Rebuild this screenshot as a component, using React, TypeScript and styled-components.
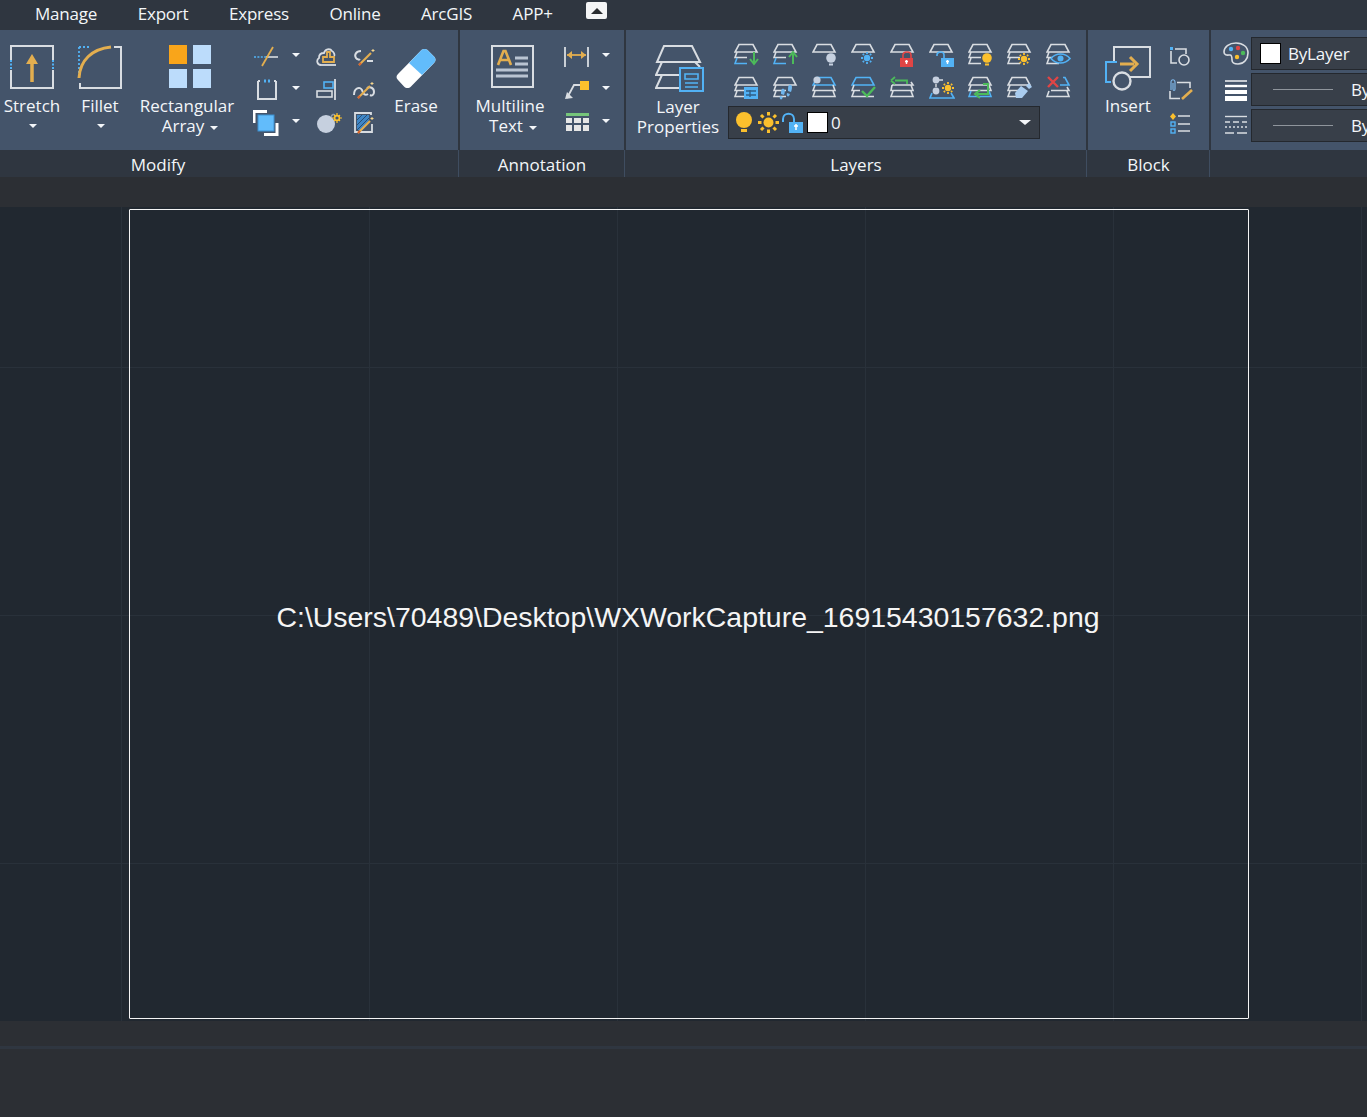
import React from "react";
import styled, { createGlobalStyle } from "styled-components";

const WHITE = "#d9dde2";
const BLUE = "#52b2f5";
const GOLD = "#e3ae4f";
const YELLOW = "#fbc02d";
const GREEN = "#4cbb5a";
const RED = "#e04545";

const GlobalStyle = createGlobalStyle`
	html, body {
		margin: 0;
		padding: 0;
		background: #2c2f34;
		overflow: hidden;
	}
	* {
		box-sizing: border-box;
	}
	svg {
		display: block;
		flex: none;
	}
`;

const Page = styled.div`
	width: 1367px;
	height: 1117px;
	overflow: hidden;
	font-family: "Open Sans", "Noto Sans", sans-serif;
	color: #f3f6f9;
	background: #2c2f34;
`;

const TabBar = styled.div`
	height: 30px;
	display: flex;
	align-items: flex-start;
	gap: 40.5px;
	padding-left: 35px;
	background: #2f3640;
`;

const Tab = styled.div`
	font-size: 17px;
	line-height: 28px;
	letter-spacing: -0.2px;
`;

const CollapseButton = styled.div`
	width: 21px;
	height: 17px;
	margin: 2px 0 0 -7px;
	display: flex;
	align-items: center;
	justify-content: center;
	background: #f4f5f6;
	border-radius: 2px;

	&::after {
		content: "";
		border-left: 6px solid transparent;
		border-right: 6px solid transparent;
		border-bottom: 6px solid #2a2d31;
	}
`;

const Ribbon = styled.div`
	display: flex;
	height: 147px;
	background: #2f3640;
	overflow: hidden;
`;

const Panel = styled.div<{ $width: number }>`
	flex: none;
	width: ${(p) => p.$width}px;
	margin-right: 2px;
	display: flex;
	flex-direction: column;
`;

const PanelBody = styled.div`
	height: 120px;
	display: flex;
	background: #44546a;
`;

const PanelTitle = styled.div<{ $endPad?: number }>`
	height: 27px;
	padding-right: ${(p) => p.$endPad ?? 0}px;
	text-align: center;
	font-size: 17px;
	line-height: 29px;
	background: #2f3640;
	box-shadow: 1px 0 0 #3f4d60;
`;

const BigTool = styled.div<{ $width: number; $margin?: number }>`
	flex: none;
	width: ${(p) => p.$width}px;
	margin-left: ${(p) => p.$margin ?? 0}px;
	padding-top: 15px;
	display: flex;
	flex-direction: column;
	align-items: center;
`;

const IconBox = styled.div<{ $height?: number; $shift?: number; $top?: number }>`
	height: ${(p) => p.$height ?? 51}px;
	margin-left: ${(p) => p.$shift ?? 0}px;
	padding-top: ${(p) => p.$top ?? 0}px;
`;

const Label = styled.div`
	font-size: 17px;
	line-height: 20px;
	text-align: center;
	white-space: nowrap;
`;

const DropLine = styled.div`
	padding-left: 6px;
`;

const Caret = styled.span<{ $size?: number }>`
	display: inline-block;
	border-left: ${(p) => p.$size ?? 4}px solid transparent;
	border-right: ${(p) => p.$size ?? 4}px solid transparent;
	border-top: ${(p) => ((p.$size ?? 4) * 3) / 4 + 1}px solid #f3f6f9;
`;

const InlineCaret = styled(Caret)`
	margin-left: 6px;
	vertical-align: 2px;
`;

const CaretLine = styled.div`
	height: 20px;
	padding-left: 2px;
	display: flex;
	align-items: center;
	justify-content: center;
`;

const SmallGrid = styled.div<{ $columns: string; $margin: number }>`
	flex: none;
	margin: 10px 0 0 ${(p) => p.$margin}px;
	display: grid;
	grid-template-columns: ${(p) => p.$columns};
	grid-auto-rows: 33px;
	align-items: center;
`;

const DropTool = styled.div<{ $endPad: number }>`
	display: flex;
	align-items: center;
	justify-content: space-between;
	padding-right: ${(p) => p.$endPad}px;
`;

const DropCaret = styled(Caret)`
	margin-bottom: 3px;
`;

const LayerColumn = styled.div`
	flex: none;
	margin-left: 4px;
	padding-top: 13px;
`;

const LayerGrid = styled.div`
	display: grid;
	grid-template-columns: repeat(9, 39px);
	grid-auto-rows: 33px;
	padding-left: 6px;
`;

const Combo = styled.div<{ $width: number; $height?: number }>`
	width: ${(p) => p.$width}px;
	height: ${(p) => p.$height ?? 33}px;
	display: flex;
	align-items: center;
	background: #383f49;
	border: 1px solid #24282e;
`;

const LayerCombo = styled(Combo)`
	margin-top: -3px;
	padding-left: 5px;
	gap: 3.5px;
`;

const ComboValue = styled.span`
	font-size: 17px;
`;

const ComboCaret = styled(Caret)`
	margin-left: auto;
	margin-right: 8px;
`;

const Swatch = styled.span`
	flex: none;
	width: 21px;
	height: 21px;
	background: #fff;
	border: 1px solid #000;
`;

const PropertyIcons = styled.div`
	flex: none;
	width: 40px;
	padding: 12px 0 0 9px;
	display: flex;
	flex-direction: column;
	align-items: center;
	gap: 14px;
`;

const PropertyCombos = styled.div`
	flex: none;
	padding-top: 7px;
	display: flex;
	flex-direction: column;
	gap: 3px;
`;

const PropertyLabel = styled.span`
	font-size: 17px;
	letter-spacing: -0.2px;
	white-space: nowrap;
`;

const ColorCombo = styled(Combo)`
	padding-left: 8px;
	gap: 7px;
`;

const LineCombo = styled(Combo)`
	padding-left: 21px;
	gap: 18px;
`;

const LinePreview = styled.span`
	flex: none;
	width: 60px;
	height: 1px;
	background: #8f959c;
`;

const TopGap = styled.div`
	height: 30px;
	background: #2c2f34;
`;

const Canvas = styled.div`
	height: 814px;
	padding: 2px 0 0 129px;
	background-color: #212830;
	background-image: linear-gradient(to right, #29313a 1px, transparent 1px),
		linear-gradient(to bottom, #29313a 1px, transparent 1px);
	background-size: 248px 248px;
	background-position: 121px 160px;
`;

const Sheet = styled.div`
	width: 1120px;
	height: 810px;
	display: flex;
	align-items: center;
	justify-content: center;
	border: 1px solid #f4f4f4;
	border-radius: 1px;
`;

const SheetText = styled.div`
	font-family: "Liberation Sans", Arial, sans-serif;
	font-size: 28.44px;
	color: #f5f5f5;
	margin: 6px 2px 0 0;
	white-space: nowrap;
`;

const BottomGap = styled.div`
	height: 25px;
	background: #2c2f34;
`;

const Stripe = styled.div`
	height: 3px;
	background: #2f3640;
`;

const StatusArea = styled.div`
	height: 68px;
	background: #2c2f34;
`;

type SvgProps = { w: number; h: number; children: React.ReactNode };

const Svg = ({ w, h, children }: SvgProps) => (
	<svg width={w} height={h} viewBox={`0 0 ${w} ${h}`} fill="none">
		{children}
	</svg>
);

const StretchIcon = () => (
	<Svg w={44} h={44}>
		<path d="M1 15V1H43V15M1 25V43H43V25" stroke={WHITE} strokeWidth="2" />
		<path d="M1 15V25M43 15V25" stroke={BLUE} strokeWidth="2" strokeDasharray="2 1.5" />
		<path d="M22 37V15" stroke={GOLD} strokeWidth="3.5" />
		<path d="M16 19L22 9L28 19Z" fill={GOLD} />
	</Svg>
);

const FilletIcon = () => (
	<Svg w={46} h={46}>
		<path d="M2 2H14M2 2V28" stroke={BLUE} strokeWidth="1.8" strokeDasharray="2 2" />
		<path d="M2 33C3 15 15 4 34 2" stroke={GOLD} strokeWidth="3" />
		<path d="M37 2H44V43H3V38" stroke={WHITE} strokeWidth="2" />
	</Svg>
);

const ArrayIcon = () => (
	<Svg w={44} h={44}>
		<rect x="1" y="0" width="18" height="19" fill="#f9a51a" />
		<rect x="25" y="0" width="18" height="19" fill="#bcdcfb" />
		<rect x="1" y="24" width="18" height="19" fill="#bcdcfb" />
		<rect x="25" y="24" width="18" height="19" fill="#bcdcfb" />
	</Svg>
);

const EraseIcon = () => (
	<Svg w={42} h={42}>
		<path d="M3 27L26 3.5C28 1.5 31 1.5 33 3.5L39 9.5C41 11.5 41 14 39 16L16 39.5C14 41.5 11 41.5 9 39.5L3 33C1 31 1 29 3 27Z" fill="#fff" />
		<path d="M14 16L26 3.5C28 1.5 31 1.5 33 3.5L39 9.5C41 11.5 41 14 39 16L27 28Z" fill="#62bcfb" />
	</Svg>
);

const TrimIcon = () => (
	<Svg w={26} h={22}>
		<path d="M1 11H13" stroke={BLUE} strokeWidth="1.6" strokeDasharray="2 1.4" />
		<path d="M13 11H25" stroke={WHITE} strokeWidth="1.6" />
		<path d="M9 20L20 1" stroke={GOLD} strokeWidth="1.8" />
	</Svg>
);

const BracketIcon = () => (
	<Svg w={26} h={22}>
		<path d="M5 2V20H23V2M5 2H7M23 2H21" stroke={WHITE} strokeWidth="2" />
		<path d="M11 2H13M15 2H17" stroke={BLUE} strokeWidth="3" />
	</Svg>
);

const CopyIcon = () => (
	<Svg w={26} h={26}>
		<path d="M1 13V1.5H14" stroke="#fff" strokeWidth="3" />
		<path d="M24 13V24.5H11" stroke="#fff" strokeWidth="3" />
		<rect x="5" y="5" width="16" height="16" fill="#62bcfb" stroke="#3c8fd0" />
	</Svg>
);

const CloudIcon = () => (
	<Svg w={22} h={22}>
		<path d="M5 19C1 19 0 14 3 12C3 8 6 7 8 7C9 3 14 2 16 5C18 6 19 9 18 10" stroke={WHITE} strokeWidth="1.8" />
		<path d="M5 19H20" stroke={WHITE} strokeWidth="1.8" />
		<path d="M11 6H14V11H18V16H7V11H11Z" stroke={GOLD} strokeWidth="1.8" />
	</Svg>
);

const AlignIcon = () => (
	<Svg w={22} h={22}>
		<rect x="8" y="3" width="9" height="6" stroke={BLUE} strokeWidth="1.6" />
		<rect x="1" y="12" width="15" height="6" stroke={WHITE} strokeWidth="1.6" />
		<path d="M19 0V21" stroke={WHITE} strokeWidth="1.8" />
	</Svg>
);

const BombIcon = () => (
	<Svg w={26} h={22}>
		<circle cx="10" cy="12" r="9" fill="#c6d0df" />
		<path d="M15 5C16 2 18 2 19 3" stroke="#8f9bac" strokeWidth="1.4" />
		<circle cx="21" cy="6" r="2.4" stroke={YELLOW} strokeWidth="1.6" />
		<path d="M21 1V3M21 9V11M16 6H18M24 6H26M18 3L19 4M23 8L24 9M18 9L19 8M23 4L24 3" stroke={YELLOW} strokeWidth="1.2" />
	</Svg>
);

const Pencil = ({ x, y }: { x: number; y: number }) => (
	<g transform={`translate(${x} ${y})`}>
		<path d="M0 13L12 1" stroke={GOLD} strokeWidth="2.2" />
		<path d="M0 13L2 11" stroke="#d8622f" strokeWidth="2.2" />
		<path d="M14 -3V0M12.5 -1.5H15.5" stroke="#f6d68d" strokeWidth="1" />
	</g>
);

const EditCurveIcon = () => (
	<Svg w={22} h={20}>
		<path d="M8 4C3 4 1 8 3 11C4 13 6 12 7 13" stroke={WHITE} strokeWidth="2" />
		<path d="M14 14H20" stroke={WHITE} strokeWidth="2" />
		<Pencil x={6} y={5} />
	</Svg>
);

const EditSplineIcon = () => (
	<Svg w={22} h={20}>
		<path d="M1 15C1 8 7 6 9 10C10 14 12 16 15 14M14 8C17 6 21 8 21 12C21 15 19 16 17 15" stroke={WHITE} strokeWidth="2" />
		<Pencil x={5} y={5} />
	</Svg>
);

const EditHatchIcon = () => (
	<Svg w={22} h={22}>
		<path d="M18 3V1H2V20H19V12" stroke={WHITE} strokeWidth="1.8" />
		<path d="M4 3H16V8L9 18H4Z" fill="#3f86c6" />
		<path d="M4 8L9 3M4 13L14 3M4 18L16 6" stroke="#274d73" strokeWidth="1" />
		<Pencil x={5} y={8} />
	</Svg>
);

const TextIcon = () => (
	<Svg w={44} h={44}>
		<rect x="1" y="1" width="41" height="41" stroke={WHITE} strokeWidth="2" />
		<path d="M7 20L12.5 6H14.5L20 20M9.5 15H17.5" stroke={GOLD} strokeWidth="2.6" />
		<path d="M24 13H37M24 19H37M5 25H37M5 31H37" stroke="#b9c4d2" strokeWidth="3" />
	</Svg>
);

const DimensionIcon = () => (
	<Svg w={26} h={22}>
		<path d="M1 1V21M24 1V21" stroke={WHITE} strokeWidth="1.8" />
		<path d="M3 9H22" stroke={GOLD} strokeWidth="1.8" />
		<path d="M3 9L8 5V13ZM22 9L17 5V13Z" fill={GOLD} />
	</Svg>
);

const LeaderIcon = () => (
	<Svg w={26} h={22}>
		<rect x="16" y="2" width="9" height="9" fill={YELLOW} />
		<path d="M16 6H10L3 19" stroke={WHITE} strokeWidth="1.8" />
		<path d="M1 20L9 19L3 13Z" fill={WHITE} />
	</Svg>
);

const TableIcon = () => (
	<Svg w={26} h={22}>
		<rect x="2" y="1" width="23" height="3" fill="#76c57a" />
		<path d="M2 6H8V11H2ZM10 6H17V11H10ZM19 6H25V11H19ZM2 13H8V19H2ZM10 13H17V19H10ZM19 13H25V19H19Z" fill="#e6e6e6" />
	</Svg>
);

const LayerPropertiesIcon = () => (
	<Svg w={50} h={50}>
		<path d="M9 1H37L45 17H2Z" stroke={WHITE} strokeWidth="2" />
		<path d="M7 17L1 30H24M7 30L1 43H24M40 17L45 22" stroke={WHITE} strokeWidth="2" />
		<rect x="25" y="23" width="23" height="23" fill="#44546a" stroke={BLUE} strokeWidth="2" />
		<path d="M30 29H43V34H30ZM30 38H43M30 42H43" stroke={BLUE} strokeWidth="1.6" />
	</Svg>
);

const InsertIcon = () => (
	<Svg w={46} h={46}>
		<path d="M9 17V2H45V32H24" stroke={WHITE} strokeWidth="2" />
		<path d="M12 17H1V37H6" stroke={BLUE} strokeWidth="2" />
		<path d="M15 19H29" stroke={GOLD} strokeWidth="3" />
		<path d="M25 12L32 19L25 26" stroke={GOLD} strokeWidth="3" />
		<circle cx="17" cy="36" r="8.5" stroke={WHITE} strokeWidth="2.4" />
	</Svg>
);

const BlockCircleIcon = () => (
	<Svg w={22} h={20}>
		<path d="M2 4V16H8M6 2H17V7" stroke={WHITE} strokeWidth="1.6" />
		<rect x="1" y="0" width="3" height="3" fill={BLUE} />
		<circle cx="15" cy="13" r="5" stroke={WHITE} strokeWidth="1.6" />
	</Svg>
);

const BlockEditIcon = () => (
	<Svg w={24} h={22}>
		<path d="M1 12V19.5H11M8 3.5H21V9" stroke={WHITE} strokeWidth="1.6" />
		<path d="M2 11V3C2 0 6 0 6 3V10C6 12 4 12 4 10V4" stroke="#7fb7e8" strokeWidth="1.2" />
		<path d="M13 20L23 11" stroke={GOLD} strokeWidth="2.6" />
	</Svg>
);

const BlockListIcon = () => (
	<Svg w={22} h={22}>
		<path d="M4 1L7 4.5L4 8L1 4.5Z" fill={YELLOW} />
		<path d="M9 4H21M9 12H21M9 19H21" stroke={WHITE} strokeWidth="1.6" />
		<rect x="2" y="10" width="4" height="4" stroke={BLUE} strokeWidth="1.4" />
		<rect x="2" y="17" width="4" height="4" stroke={BLUE} strokeWidth="1.4" />
	</Svg>
);

const PaletteIcon = () => (
	<Svg w={26} h={24}>
		<path d="M13 1C6 1 1 5 1 10C1 14 5 13 7 13C9 13 9 16 9 18C9 21 12 22 15 22C21 22 25 17 25 11C25 5 20 1 13 1Z" stroke={WHITE} strokeWidth="1.6" />
		<circle cx="8" cy="7" r="2.2" fill={BLUE} />
		<circle cx="15" cy="6" r="2.2" fill={RED} />
		<circle cx="20" cy="11" r="2.2" fill={GREEN} />
		<circle cx="14" cy="15" r="2.2" fill={YELLOW} />
	</Svg>
);

const LineWeightIcon = () => (
	<Svg w={22} h={21}>
		<path d="M0 1H22" stroke="#fff" strokeWidth="1.4" />
		<path d="M0 6H22" stroke="#fff" strokeWidth="2.4" />
		<rect x="0" y="10" width="22" height="4" fill="#fff" />
		<rect x="0" y="16" width="22" height="5" fill="#fff" />
	</Svg>
);

const LineTypeIcon = () => (
	<Svg w={22} h={21}>
		<path d="M0 1.5H22" stroke={WHITE} strokeWidth="1.4" />
		<path d="M0 7H5M8 7H14M17 7H22" stroke={WHITE} strokeWidth="1.4" />
		<path d="M0 12H2M4 12H6M8 12H10M12 12H14M16 12H18M20 12H22" stroke={WHITE} strokeWidth="1.4" />
		<path d="M0 18H9M12 18H22" stroke={WHITE} strokeWidth="1.4" />
	</Svg>
);

// the layer tools all share the same stack of sheets
const SheetTop = ({ color = WHITE }: { color?: string }) => (
	<path d="M5 1.5H19L23 9H1Z" stroke={color} strokeWidth="1.6" />
);
const SheetsLeft = ({ last = WHITE }: { last?: string }) => (
	<>
		<path d="M3 9L1 14.5H13" stroke={WHITE} strokeWidth="1.6" />
		<path d="M3 15L1 20.5H13" stroke={last} strokeWidth="1.6" />
	</>
);
const SheetsFull = ({ color = WHITE }: { color?: string }) => (
	<>
		<path d="M3 9L1 14.5H23L21 9" stroke={WHITE} strokeWidth="1.6" />
		<path d="M3 15L1 20.5H23L21 15" stroke={color} strokeWidth="1.6" />
	</>
);

const Bulb = ({ color, x, y }: { color: string; x: number; y: number }) => (
	<g transform={`translate(${x} ${y})`}>
		<circle cx="5" cy="5" r="4.8" fill={color} />
		<rect x="3" y="10.5" width="4" height="2" fill={color} />
	</g>
);

const Sun = ({ color, x, y }: { color: string; x: number; y: number }) => (
	<g transform={`translate(${x} ${y})`}>
		<circle cx="6" cy="6" r="3.2" fill={color} />
		<path d="M6 0V2M6 10V12M0 6H2M10 6H12M1.8 1.8L3 3M9 9L10.2 10.2M1.8 10.2L3 9M9 3L10.2 1.8" stroke={color} strokeWidth="1.8" />
	</g>
);

const Lock = ({ color, x, y, open }: { color: string; x: number; y: number; open?: boolean }) => (
	<g transform={`translate(${x} ${y})`}>
		<path d={open ? "M-4 4V3C-4 -1 3 -1 3 3V6" : "M3 6V3C3 -1 11 -1 11 3V6"} stroke={color} strokeWidth="1.6" />
		<rect x="0" y="6" width="13" height="9" fill={color} />
		<path d="M6.5 8V12M5 9.5H8" stroke="#fff" strokeWidth="1.4" />
	</g>
);

const layerIcons: React.ReactNode[] = [
	<>
		<SheetTop />
		<SheetsLeft last={BLUE} />
		<path d="M20 9V20" stroke={GREEN} strokeWidth="2" />
		<path d="M16 16L20 21L24 16" stroke={GREEN} strokeWidth="2" />
	</>,
	<>
		<SheetTop />
		<SheetsLeft last={BLUE} />
		<path d="M20 21V11" stroke={GREEN} strokeWidth="2" />
		<path d="M16 14L20 9L24 14" stroke={GREEN} strokeWidth="2" />
	</>,
	<>
		<SheetTop />
		<Bulb color="#c6d0df" x={14} y={10} />
	</>,
	<>
		<SheetTop />
		<Sun color={BLUE} x={10} y={9} />
	</>,
	<>
		<SheetTop />
		<Lock color={RED} x={10} y={9} />
	</>,
	<>
		<SheetTop />
		<Lock color={BLUE} x={12} y={9} open />
	</>,
	<>
		<SheetTop />
		<SheetsLeft />
		<Bulb color={YELLOW} x={14} y={10} />
	</>,
	<>
		<SheetTop />
		<SheetsLeft />
		<Sun color={YELLOW} x={11} y={10} />
	</>,
	<>
		<SheetTop />
		<SheetsLeft />
		<path d="M5 15.5C10 9.5 19 9.5 24 15.5C19 21.5 10 21.5 5 15.5Z" fill="#44546a" stroke={BLUE} strokeWidth="1.6" />
		<circle cx="14.5" cy="15.5" r="3" fill={BLUE} />
	</>,
	<>
		<SheetTop />
		<SheetsLeft />
		<rect x="10" y="11" width="14" height="12" fill={BLUE} />
		<path d="M12 15H22M12 19H22M16 14V21" stroke="#2f5f87" strokeWidth="1.4" />
	</>,
	<>
		<SheetTop />
		<SheetsLeft />
		<path d="M16 9C19 8 20 11 18 16L15 15C15 12 15 10 16 9ZM14 17L17 18L16 20C15 21 13 20 14 17Z" fill="#6fb6ee" />
		<path d="M9 13C11 12 13 14 11 19L8 18C8 16 8 14 9 13ZM7 20L10 21L9 23C8 24 6 23 7 20Z" fill="#6fb6ee" />
	</>,
	<>
		<SheetTop color={BLUE} />
		<SheetsFull />
		<circle cx="5" cy="4" r="3.6" fill="#c6d0df" />
	</>,
	<>
		<SheetTop color={BLUE} />
		<path d="M3 9L1 14.5H9M3 15L1 20.5H23" stroke={WHITE} strokeWidth="1.6" />
		<path d="M11 15L16 20L24 11" stroke={GREEN} strokeWidth="2.4" />
	</>,
	<>
		<path d="M2 9H23L21 6M2 9L1 14.5H23L21 9M3 15L1 20.5H23L21 15" stroke={WHITE} strokeWidth="1.6" />
		<path d="M5 4.5H17V8M1 4.5L5 1M1 4.5L5 8" stroke={GREEN} strokeWidth="1.8" />
	</>,
	<>
		<circle cx="7" cy="4" r="3.4" fill="#c6d0df" />
		<circle cx="7" cy="15" r="3.4" fill="#c6d0df" />
		<path d="M10 4H14M7 8V11" stroke={WHITE} strokeWidth="1.4" />
		<Sun color={YELLOW} x={13} y={6} />
		<path d="M3 17L1 22H25L22 17" stroke={BLUE} strokeWidth="1.6" />
	</>,
	<>
		<SheetTop />
		<SheetsFull color={BLUE} />
		<path d="M15 8H20V18H9" stroke={GREEN} strokeWidth="2" />
		<path d="M12 14L7 18L12 22" stroke={GREEN} strokeWidth="2" />
	</>,
	<>
		<SheetTop />
		<SheetsLeft />
		<path d="M8 17L14 10L21 15L15 22H9Z" fill="#a9ccef" />
		<path d="M19 10L22 7L25 11L22 13Z" fill="#a9ccef" />
	</>,
	<>
		<path d="M17 1.5H19L23 9H14" stroke={BLUE} strokeWidth="1.6" />
		<path d="M3 15L1 20.5H23L21 15M5 14.5H23L21 11" stroke={WHITE} strokeWidth="1.6" />
		<path d="M2 1L12 11M12 1L2 11" stroke={RED} strokeWidth="2.4" />
	</>,
];

const SmallDrop = ({ children, endPad }: { children: React.ReactNode; endPad: number }) => (
	<DropTool $endPad={endPad}>
		{children}
		<DropCaret />
	</DropTool>
);

export default function App() {
	return (
		<Page>
			<GlobalStyle />
			<TabBar>
				<Tab>Manage</Tab>
				<Tab>Export</Tab>
				<Tab>Express</Tab>
				<Tab>Online</Tab>
				<Tab>ArcGIS</Tab>
				<Tab>APP+</Tab>
				<CollapseButton />
			</TabBar>
			<Ribbon>
				<Panel $width={458}>
					<PanelBody>
						<BigTool $width={64}>
							<IconBox>
								<StretchIcon />
							</IconBox>
							<Label>Stretch</Label>
							<CaretLine>
								<Caret />
							</CaretLine>
						</BigTool>
						<BigTool $width={64} $margin={4}>
							<IconBox>
								<FilletIcon />
							</IconBox>
							<Label>Fillet</Label>
							<CaretLine>
								<Caret />
							</CaretLine>
						</BigTool>
						<BigTool $width={104} $margin={3}>
							<IconBox $shift={5}>
								<ArrayIcon />
							</IconBox>
							<Label>
								Rectangular
								<DropLine>
									Array
									<InlineCaret />
								</DropLine>
							</Label>
						</BigTool>
						<SmallGrid $columns="63px 37px 30px" $margin={14}>
							<SmallDrop endPad={16}>
								<TrimIcon />
							</SmallDrop>
							<CloudIcon />
							<EditCurveIcon />
							<SmallDrop endPad={16}>
								<BracketIcon />
							</SmallDrop>
							<AlignIcon />
							<EditSplineIcon />
							<SmallDrop endPad={16}>
								<CopyIcon />
							</SmallDrop>
							<BombIcon />
							<EditHatchIcon />
						</SmallGrid>
						<BigTool $width={60} $margin={3}>
							<IconBox $top={2}>
								<EraseIcon />
							</IconBox>
							<Label>Erase</Label>
						</BigTool>
					</PanelBody>
					<PanelTitle $endPad={142}>Modify</PanelTitle>
				</Panel>
				<Panel $width={164}>
					<PanelBody>
						<BigTool $width={100}>
							<IconBox $shift={6}>
								<TextIcon />
							</IconBox>
							<Label>
								Multiline
								<DropLine>
									Text
									<InlineCaret />
								</DropLine>
							</Label>
						</BigTool>
						<SmallGrid $columns="54px" $margin={4}>
							<SmallDrop endPad={8}>
								<DimensionIcon />
							</SmallDrop>
							<SmallDrop endPad={8}>
								<LeaderIcon />
							</SmallDrop>
							<SmallDrop endPad={8}>
								<TableIcon />
							</SmallDrop>
						</SmallGrid>
					</PanelBody>
					<PanelTitle>Annotation</PanelTitle>
				</Panel>
				<Panel $width={460}>
					<PanelBody>
						<BigTool $width={92} $margin={6}>
							<IconBox $height={52} $shift={4}>
								<LayerPropertiesIcon />
							</IconBox>
							<Label>
								Layer
								<br />
								Properties
							</Label>
						</BigTool>
						<LayerColumn>
							<LayerGrid>
								{layerIcons.map((icon, i) => (
									<Svg key={i} w={26} h={24}>
										{icon}
									</Svg>
								))}
							</LayerGrid>
							<LayerCombo $width={312}>
								<Svg w={20} h={24}>
									<circle cx="10" cy="9" r="8" fill={YELLOW} />
									<rect x="7" y="18" width="6" height="3" fill={YELLOW} />
								</Svg>
								<Svg w={21} h={21}>
									<circle cx="10.5" cy="10.5" r="5" fill={YELLOW} />
									<path d="M10.5 0V3.5M10.5 17.5V21M0 10.5H3.5M17.5 10.5H21M3 3L5.5 5.5M15.5 15.5L18 18M3 18L5.5 15.5M15.5 5.5L18 3" stroke={YELLOW} strokeWidth="3" />
								</Svg>
								<Svg w={21} h={22}>
									<path d="M1 10V7C1 0 12 0 12 7V10" stroke={BLUE} strokeWidth="2" />
									<rect x="7" y="10" width="14" height="11" fill={BLUE} />
									<path d="M14 12V18M12 14H16" stroke="#fff" strokeWidth="1.5" />
								</Svg>
								<Swatch />
								<ComboValue>0</ComboValue>
								<ComboCaret $size={6} />
							</LayerCombo>
						</LayerColumn>
					</PanelBody>
					<PanelTitle>Layers</PanelTitle>
				</Panel>
				<Panel $width={121}>
					<PanelBody>
						<BigTool $width={80}>
							<IconBox>
								<InsertIcon />
							</IconBox>
							<Label>Insert</Label>
						</BigTool>
						<SmallGrid $columns="30px" $margin={1}>
							<BlockCircleIcon />
							<BlockEditIcon />
							<BlockListIcon />
						</SmallGrid>
					</PanelBody>
					<PanelTitle>Block</PanelTitle>
				</Panel>
				<Panel $width={200}>
					<PanelBody>
						<PropertyIcons>
							<PaletteIcon />
							<LineWeightIcon />
							<LineTypeIcon />
						</PropertyIcons>
						<PropertyCombos>
							<ColorCombo $width={160}>
								<Swatch />
								<PropertyLabel>ByLayer</PropertyLabel>
							</ColorCombo>
							<LineCombo $width={160}>
								<LinePreview />
								<PropertyLabel>ByLayer</PropertyLabel>
							</LineCombo>
							<LineCombo $width={160}>
								<LinePreview />
								<PropertyLabel>ByLayer</PropertyLabel>
							</LineCombo>
						</PropertyCombos>
					</PanelBody>
					<PanelTitle />
				</Panel>
			</Ribbon>
			<TopGap />
			<Canvas>
				<Sheet>
					<SheetText>C:\Users\70489\Desktop\WXWorkCapture_16915430157632.png</SheetText>
				</Sheet>
			</Canvas>
			<BottomGap />
			<Stripe />
			<StatusArea />
		</Page>
	);
}
